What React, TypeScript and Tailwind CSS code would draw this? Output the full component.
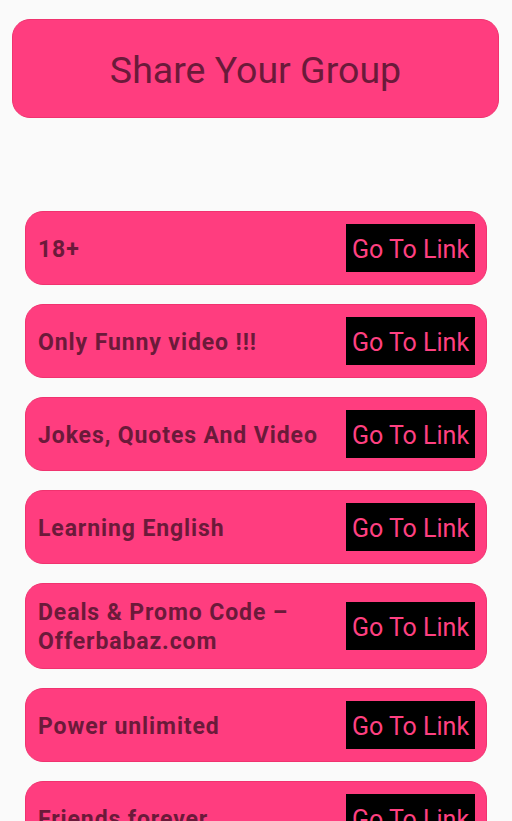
import React from 'react';

const groups = [
    '18+',
    'Only Funny video !!!',
    'Jokes, Quotes And Video',
    'Learning English',
    'Deals & Promo Code – Offerbabaz.com',
    'Power unlimited',
    'Friends forever',
    'Status Video',
];

const App: React.FC = () => {
    return (
        <div className="h-screen overflow-hidden bg-[#fafafa] font-['Roboto',sans-serif]">
            {/* Header card */}
            <div className="pt-[19px] pl-3 pr-[13px]">
                <div className="h-[99px] rounded-[18px] bg-[#ff3d7f] border border-[#f0336f] flex items-center justify-center pt-1">
                    <h1 className="text-[37.5px] text-[#6b1a3a] leading-none">Share Your Group</h1>
                </div>
            </div>

            {/* Group list */}
            <main className="mt-[93px] px-[25px] flex flex-col gap-[19px]">
                {groups.map((name) => (
                    <div
                        key={name}
                        className="flex items-center justify-between rounded-[18px] bg-[#ff3d7f] border border-[#f0336f] py-3 pl-3 pr-[11px]"
                    >
                        <span className="flex-1 pr-5 pt-0.5 text-[23px] tracking-[0.9px] font-bold leading-[29px] text-[#6b1a3a]">{name}</span>
                        <button className="w-[129px] h-12 flex-shrink-0 bg-black text-[#ff4081] text-[25px] leading-none pt-0.5">
                            Go To Link
                        </button>
                    </div>
                ))}
            </main>
        </div>
    );
};

export default App;
